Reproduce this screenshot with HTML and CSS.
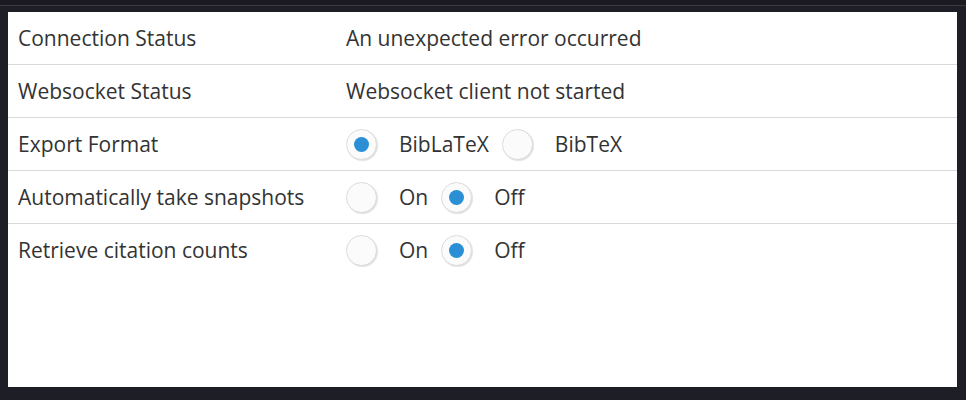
FILE: index.html
```html
<!DOCTYPE html>
<html>
<head>
<meta charset="utf-8">
<link rel="stylesheet" href="styles.css">
</head>
<body>
<div class="topbar"></div>
<div class="frame">
  <div class="panel">
    <div class="row">
      <div class="label">Connection Status</div>
      <div class="value">An unexpected error occurred</div>
    </div>
    <div class="row">
      <div class="label">Websocket Status</div>
      <div class="value">Websocket client not started</div>
    </div>
    <div class="row">
      <div class="label">Export Format</div>
      <div class="value options">
        <span class="radio checked"></span><span class="opt">BibLaTeX</span>
        <span class="radio"></span><span class="opt">BibTeX</span>
      </div>
    </div>
    <div class="row">
      <div class="label">Automatically take snapshots</div>
      <div class="value options">
        <span class="radio"></span><span class="opt">On</span>
        <span class="radio checked"></span><span class="opt">Off</span>
      </div>
    </div>
    <div class="row last">
      <div class="label">Retrieve citation counts</div>
      <div class="value options">
        <span class="radio"></span><span class="opt">On</span>
        <span class="radio checked"></span><span class="opt">Off</span>
      </div>
    </div>
  </div>
</div>
</body>
</html>
```
FILE: styles.css
```css
html, body {
  margin: 0;
  padding: 0;
  height: 100%;
}
body {
  background: #1e1e26;
  font-family: "Open Sans", "Noto Sans", sans-serif;
  color: #333;
  display: flex;
  flex-direction: column;
}
.topbar {
  height: 5px;
  background: #1a1a20;
  border-bottom: 1px solid #3a3a42;
}
.frame {
  padding: 6px 9px 13px 8px;
  flex: 1;
  display: flex;
}
.panel {
  background: #fff;
  flex: 1;
}
.row {
  display: flex;
  align-items: center;
  height: 52px;
  border-bottom: 1px solid #d9d9d9;
  font-size: 21px;
}
.row.last {
  border-bottom: none;
}
.label {
  width: 328px;
  padding-left: 10px;
}
.options {
  display: flex;
  align-items: center;
}
.radio {
  width: 29px;
  height: 29px;
  border-radius: 50%;
  border: 1px solid #dcdcdc;
  box-shadow: 1px 1px 1px rgba(0,0,0,0.12);
  background: #fbfbfb;
  display: flex;
  align-items: center;
  justify-content: center;
  margin-right: 22px;
}
.radio.checked::after {
  content: "";
  width: 15px;
  height: 15px;
  border-radius: 50%;
  background: #2a8fd4;
}
.opt {
  margin-right: 13px;
}
```
